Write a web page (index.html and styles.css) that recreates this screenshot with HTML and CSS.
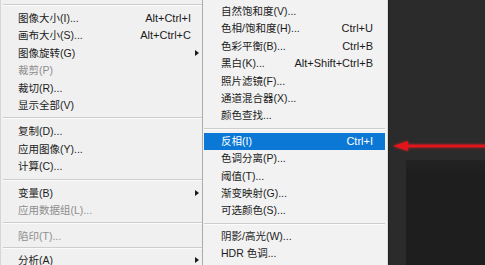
FILE: index.html
```html
<!DOCTYPE html>
<html lang="zh-CN">
<head>
    <meta charset="UTF-8">
    <title>图像菜单 - 调整</title>
    <link rel="stylesheet" href="styles.css">
</head>
<body>
    <div class="menu menu-left">
        <div class="sep"></div>
        <div class="item"><span class="label">图像大小(I)...</span><span class="key">Alt+Ctrl+I</span><span class="sub"></span></div>
        <div class="item"><span class="label">画布大小(S)...</span><span class="key">Alt+Ctrl+C</span><span class="sub"></span></div>
        <div class="item"><span class="label">图像旋转(G)</span><span class="sub"><i class="arrow"></i></span></div>
        <div class="item disabled"><span class="label">裁剪(P)</span><span class="sub"></span></div>
        <div class="item"><span class="label">裁切(R)...</span><span class="sub"></span></div>
        <div class="item"><span class="label">显示全部(V)</span><span class="sub"></span></div>
        <div class="sep"></div>
        <div class="item"><span class="label">复制(D)...</span><span class="sub"></span></div>
        <div class="item"><span class="label">应用图像(Y)...</span><span class="sub"></span></div>
        <div class="item"><span class="label">计算(C)...</span><span class="sub"></span></div>
        <div class="sep"></div>
        <div class="item"><span class="label">变量(B)</span><span class="sub"><i class="arrow"></i></span></div>
        <div class="item disabled"><span class="label">应用数据组(L)...</span><span class="sub"></span></div>
        <div class="sep"></div>
        <div class="item disabled"><span class="label">陷印(T)...</span><span class="sub"></span></div>
        <div class="sep sep-tight"></div>
        <div class="item"><span class="label">分析(A)</span><span class="sub"><i class="arrow"></i></span></div>
    </div>

    <div class="menu menu-right">
        <div class="item"><span class="label">自然饱和度(V)...</span><span class="sub"></span></div>
        <div class="item"><span class="label">色相/饱和度(H)...</span><span class="key">Ctrl+U</span><span class="sub"></span></div>
        <div class="item"><span class="label">色彩平衡(B)...</span><span class="key">Ctrl+B</span><span class="sub"></span></div>
        <div class="item"><span class="label">黑白(K)...</span><span class="key">Alt+Shift+Ctrl+B</span><span class="sub"></span></div>
        <div class="item"><span class="label">照片滤镜(F)...</span><span class="sub"></span></div>
        <div class="item"><span class="label">通道混合器(X)...</span><span class="sub"></span></div>
        <div class="item"><span class="label">颜色查找...</span><span class="sub"></span></div>
        <div class="sep"></div>
        <div class="item active"><span class="label">反相(I)</span><span class="key">Ctrl+I</span><span class="sub"></span></div>
        <div class="item"><span class="label">色调分离(P)...</span><span class="sub"></span></div>
        <div class="item"><span class="label">阈值(T)...</span><span class="sub"></span></div>
        <div class="item"><span class="label">渐变映射(G)...</span><span class="sub"></span></div>
        <div class="item"><span class="label">可选颜色(S)...</span><span class="sub"></span></div>
        <div class="sep"></div>
        <div class="item"><span class="label">阴影/高光(W)...</span><span class="sub"></span></div>
        <div class="item"><span class="label">HDR 色调...</span><span class="sub"></span></div>
    </div>

    <div class="canvas">
        <div class="canvas-shade"></div>
        <!-- красная стрелка-указатель -->
        <svg class="pointer" width="97" height="16" viewBox="0 0 97 16">
            <rect x="11" y="6.6" width="86" height="2.8" fill="#e2141c"/>
            <polygon points="0,8 15,3 15,13" fill="#e2141c"/>
        </svg>
    </div>
</body>
</html>
```

FILE: styles.css
```css
html, body {
    margin: 0;
    padding: 0;
}

body {
    width: 485px;
    height: 265px;
    overflow: hidden;
    display: flex;
    background-color: #2b2b2b;
    font-family: "Liberation Sans", "Noto Sans CJK SC", sans-serif;
    color: #1b1b1b;
}

.menu {
    flex: none;
    height: 265px;
    overflow: hidden;
    box-sizing: border-box;
}

.menu-left {
    width: 203px;
    padding-top: 1px;
    background-color: #f0f0f0;
    border-left: 1px solid #d6d6d6;
    border-right: 1px solid #ababab;
}

.menu-right {
    width: 185px;
    padding-top: 3px;
    background-color: #f2f2f2;
    border-right: 1px solid #dcdcdc;
}

.item {
    display: flex;
    align-items: center;
    height: 17.4px;
    line-height: 17.4px;
    padding-left: 17px;
    white-space: nowrap;
}

.menu-right .item {
    margin: 0 2px 0 1px;
    padding-left: 17px;
}

.label {
    flex: 1;
    font-size: 10.5px;
}

.key {
    font-size: 11px;
}

.sub {
    flex: none;
    display: flex;
    align-items: center;
    width: 11px;
    padding-left: 4px;
    box-sizing: border-box;
}

.menu-right .sub {
    width: 12px;
}

.arrow {
    display: block;
    width: 0;
    height: 0;
    border-top: 3.5px solid transparent;
    border-bottom: 3.5px solid transparent;
    border-left: 4px solid #1b1b1b;
}

.item.disabled {
    color: #8e8e8e;
}

.item.active {
    background-color: #0b78d6;
    color: #fff;
}

.sep {
    height: 0;
    margin: 3px 0 4px 2px;
    border-top: 1px solid #cdcdcd;
    border-bottom: 1px solid #fbfbfb;
}

.menu-right .sep {
    margin: 3px 2px 3px 1px;
}

.sep-tight {
    margin-top: 1px;
    margin-bottom: 3px;
}

.canvas {
    flex: 1;
    position: relative;
    box-sizing: border-box;
    padding: 160px 0 0 17px;
    border-left: 1px solid #222;
}

.canvas-shade {
    height: 100%;
    background: linear-gradient(180deg, #232323 0, #1e1e1e 14px);
}

.pointer {
    position: absolute;
    left: 4px;
    top: 138px;
    filter: drop-shadow(0 0 1.5px rgba(255, 40, 40, 0.7));
}
```
